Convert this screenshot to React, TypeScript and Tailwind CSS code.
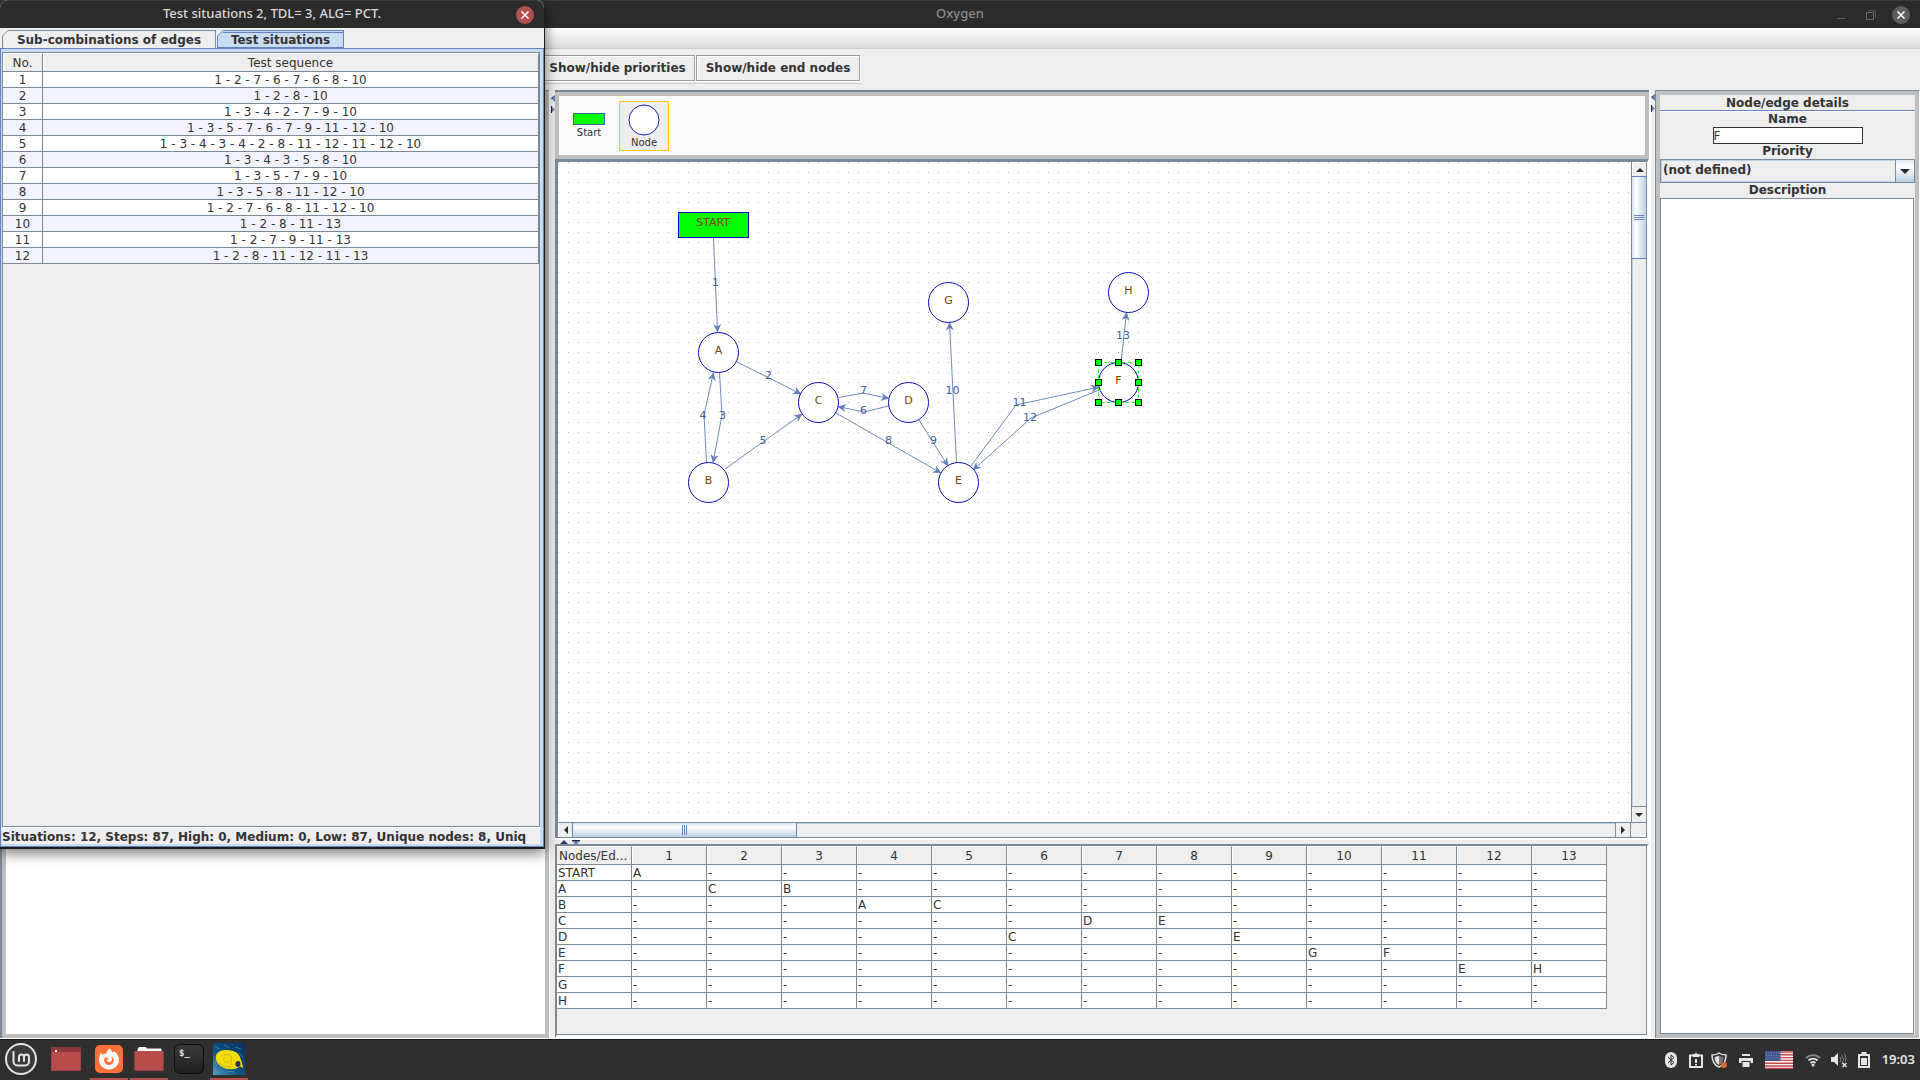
import React from "react";

const sequences = [
  "1 - 2 - 7 - 6 - 7 - 6 - 8 - 10",
  "1 - 2 - 8 - 10",
  "1 - 3 - 4 - 2 - 7 - 9 - 10",
  "1 - 3 - 5 - 7 - 6 - 7 - 9 - 11 - 12 - 10",
  "1 - 3 - 4 - 3 - 4 - 2 - 8 - 11 - 12 - 11 - 12 - 10",
  "1 - 3 - 4 - 3 - 5 - 8 - 10",
  "1 - 3 - 5 - 7 - 9 - 10",
  "1 - 3 - 5 - 8 - 11 - 12 - 10",
  "1 - 2 - 7 - 6 - 8 - 11 - 12 - 10",
  "1 - 2 - 8 - 11 - 13",
  "1 - 2 - 7 - 9 - 11 - 13",
  "1 - 2 - 8 - 11 - 12 - 11 - 13",
];

const edgeNumbers = [1, 2, 3, 4, 5, 6, 7, 8, 9, 10, 11, 12, 13];

const matrix: { node: string; targets: Record<number, string> }[] = [
  { node: "START", targets: { 1: "A" } },
  { node: "A", targets: { 2: "C", 3: "B" } },
  { node: "B", targets: { 4: "A", 5: "C" } },
  { node: "C", targets: { 7: "D", 8: "E" } },
  { node: "D", targets: { 6: "C", 9: "E" } },
  { node: "E", targets: { 10: "G", 11: "F" } },
  { node: "F", targets: { 12: "E", 13: "H" } },
  { node: "G", targets: {} },
  { node: "H", targets: {} },
];

const nodes = [
  { name: "A", x: 160.5, y: 190.5 },
  { name: "B", x: 150.5, y: 320.5 },
  { name: "C", x: 260.5, y: 240.5 },
  { name: "D", x: 350.5, y: 240.5 },
  { name: "E", x: 400.5, y: 320.5 },
  { name: "G", x: 390.5, y: 140.5 },
  { name: "H", x: 570.5, y: 130.5 },
  { name: "F", x: 560.5, y: 220.5 },
];

const edges = [
  { label: "1", points: "155.5,76 159.5,170", x: 157.5, y: 124 },
  { label: "2", points: "179,200 243,232", x: 210.5, y: 217 },
  { label: "3", points: "161.5,210.5 164,253 155,300.5", x: 164.5, y: 257 },
  { label: "4", points: "148.5,300.5 146,253 155.5,210.5", x: 145, y: 257 },
  { label: "5", points: "167,307 244,252", x: 205, y: 282 },
  { label: "6", points: "330.5,244 306,250 280,244.5", x: 305.5, y: 252 },
  { label: "7", points: "281,235.5 305,231 331,236.5", x: 305.5, y: 232 },
  { label: "8", points: "278,251 383,311", x: 330.5, y: 282 },
  { label: "9", points: "361,258 390,304", x: 375.5, y: 282 },
  { label: "10", points: "398.5,300.5 391.5,160.5", x: 394.5, y: 232 },
  { label: "11", points: "413,304 458,243 541,225", x: 461.5, y: 244 },
  { label: "12", points: "541,228 473,256 415,308", x: 472, y: 259 },
  { label: "13", points: "563,200.5 568.5,150.5", x: 565, y: 177 },
];

const handles = [
  [540.5, 200.5],
  [560.5, 200.5],
  [580.5, 200.5],
  [540.5, 220.5],
  [580.5, 220.5],
  [540.5, 240.5],
  [560.5, 240.5],
  [580.5, 240.5],
];

function Diagram() {
  return (
    <svg
      className="block h-full w-full bg-white"
      role="img"
      aria-label="Process graph"
      fontFamily="'DejaVu Sans', sans-serif"
      fontSize="11"
      textAnchor="middle"
    >
      <defs>
        <pattern id="dots" width="10" height="10" patternUnits="userSpaceOnUse">
          <rect width="1" height="1" fill="#bdbdbd" />
        </pattern>
        <marker
          id="arrow"
          markerUnits="userSpaceOnUse"
          markerWidth="12"
          markerHeight="12"
          refX="9"
          refY="5"
          orient="auto"
        >
          <path d="M9.500 5 1 1 3.500 5 1 9z" fill="#6482b9" />
        </marker>
      </defs>
      <rect width="100%" height="100%" fill="url(#dots)" />
      {edges.map((e) => (
        <polyline
          key={e.label}
          points={e.points}
          fill="none"
          stroke="#6c89be"
          markerEnd="url(#arrow)"
        />
      ))}
      {edges.map((e) => (
        <text key={e.label} x={e.x} y={e.y} fill="#446299">
          {e.label}
        </text>
      ))}
      <rect x="120.5" y="50.5" width="70" height="25" fill="#00ff00" stroke="#0000a8" />
      <text x="155" y="64" fill="#774400">
        START
      </text>
      {nodes.map((n) => (
        <g key={n.name}>
          <circle cx={n.x} cy={n.y} r="20" fill="#fff" stroke="#0a0ab4" />
          <text x={n.x} y={n.y + 1} fill="#774400">
            {n.name}
          </text>
        </g>
      ))}
      <rect
        x="540.5"
        y="200.5"
        width="40"
        height="40"
        fill="none"
        stroke="#00ff00"
        strokeDasharray="3 3"
      />
      {handles.map(([x, y]) => (
        <rect key={x + "-" + y} x={x - 3} y={y - 3} width="6" height="6" fill="#00ff00" stroke="#000" />
      ))}
    </svg>
  );
}

function Triangle({ d, w, h }: { d: string; w: number; h: number }) {
  return (
    <svg width={w} height={h} aria-hidden="true">
      <path d={d} fill="#2b2b2b" />
    </svg>
  );
}

function SplitArrows() {
  return (
    <svg width="4" height="18" className="mt-1" aria-hidden="true">
      <path d="M4 0v7L0 3.500z" fill="#6382bf" />
      <path d="M4 0 0 3.500h1z" fill="#222" />
      <path d="M0 11l4 3.500L0 18z" fill="#6382bf" />
      <path d="M0 11h1v7H0z" fill="#222" />
    </svg>
  );
}

function Canvas() {
  return (
    <div className="flex min-h-0 flex-1 flex-col border-l-3 border-t-3 border-[#7a8a99] border-r-2 border-r-white">
      <div className="flex min-h-0 flex-1">
        <div className="min-w-0 flex-1">
          <Diagram />
        </div>
        <div className="flex w-4 flex-col border-x border-[#7a8a99] bg-[#eeeeee]">
          <button aria-label="Scroll up" className="flex h-3.5 items-center justify-center border-t border-l border-white">
            <Triangle w={8} h={4} d="M0 4 4 0l4 4z" />
          </button>
          <div className="flex h-[83px] flex-col items-center justify-center gap-px border-y border-[#6382bf] bg-linear-to-r from-[#d5e3f1] via-white via-30% to-[#b8cfe5]">
            <i className="h-px w-2.5 bg-[#6382bf]" />
            <i className="h-px w-2.5 bg-[#6382bf]" />
            <i className="h-px w-2.5 bg-[#6382bf]" />
          </div>
          <div className="flex-1 border-l border-[#b8cfe5]" />
          <button aria-label="Scroll down" className="flex h-4 items-center justify-center border-t border-[#7a8a99]">
            <Triangle w={8} h={4} d="M0 0h8L4 4z" />
          </button>
        </div>
      </div>
      <div className="flex h-4 border-y border-[#7a8a99] bg-[#eeeeee]">
        <button aria-label="Scroll left" className="flex w-3.5 items-center justify-center border-l border-white">
          <Triangle w={4} h={8} d="M4 0v8L0 4z" />
        </button>
        <div className="flex w-[225px] items-center justify-center gap-px border-x border-[#6382bf] bg-linear-to-b from-[#d5e3f1] via-white via-30% to-[#b8cfe5]">
          <i className="h-2.5 w-px bg-[#6382bf]" />
          <i className="h-2.5 w-px bg-[#6382bf]" />
          <i className="h-2.5 w-px bg-[#6382bf]" />
        </div>
        <div className="flex-1 border-t border-[#b8cfe5]" />
        <button aria-label="Scroll right" className="flex w-4 items-center justify-center border-x border-[#7a8a99]">
          <Triangle w={4} h={8} d="M0 0v8l4-4z" />
        </button>
        <div className="w-4 border-r border-[#7a8a99]" />
      </div>
    </div>
  );
}

function MatrixTable() {
  return (
    <div className="h-[194px] shrink-0 border-t-2 border-l-2 border-[#7a8a99] border-r-2 border-r-white border-b-3 border-b-white">
      <div className="h-full border-r border-b border-[#7a8a99] bg-[#eeeeee]">
        <table className="table-fixed border-separate border-spacing-0 text-[12px] leading-[13px] text-[#333]">
          <colgroup>
            <col className="w-[75px]" />
            {edgeNumbers.map((n) => (
              <col key={n} className="w-[75px]" />
            ))}
          </colgroup>
          <thead>
            <tr>
              <th className="h-[19px] overflow-hidden border-t border-r border-b border-[#7a8a99] border-t-white p-0 pt-0.5 pl-0.5 text-left font-normal whitespace-nowrap">
                Nodes/Ed...
              </th>
              {edgeNumbers.map((n) => (
                <th
                  key={n}
                  className="h-[19px] border-t border-r border-b border-[#7a8a99] border-t-white p-0 pt-0.5 text-center font-normal shadow-[inset_1px_0_0_#fff]"
                >
                  {n}
                </th>
              ))}
            </tr>
          </thead>
          <tbody>
            {matrix.map((row) => (
              <tr key={row.node} className="bg-white">
                <td className="h-4 border-r border-b border-[#7a8a99] p-0 pt-0.5 pl-px">{row.node}</td>
                {edgeNumbers.map((n) => (
                  <td key={n} className="h-4 border-r border-b border-[#7a8a99] p-0 pt-0.5 pl-px">
                    {row.targets[n] ?? "-"}
                  </td>
                ))}
              </tr>
            ))}
          </tbody>
        </table>
      </div>
    </div>
  );
}

function Details() {
  return (
    <aside className="flex w-[265px] shrink-0 flex-col border-l border-t border-[#7a8a99] border-r border-r-white text-[12px] leading-[15px] font-bold text-[#333]">
      <div className="flex flex-1 flex-col border-4 border-[#bfbfbf] text-center">
        <h2 className="border-b border-[#6382bf] pt-0.5 leading-[13px]">Node/edge details</h2>
        <label htmlFor="name" className="border-t border-white">
          Name
        </label>
        <input
          id="name"
          defaultValue="F"
          className="h-[17px] w-[150px] self-center border border-[#333] bg-white font-normal text-[#333] outline-none"
        />
        <label htmlFor="priority">Priority</label>
        <div className="relative h-6">
          <select
            id="priority"
            className="block h-full w-full appearance-none border border-[#7a8a99] bg-[#eeeeee] pr-5 pb-0.5 pl-0.5 font-bold shadow-[inset_0_0_0_1px_#b8cfe5] outline-none"
          >
            <option>(not defined)</option>
          </select>
          <span className="pointer-events-none absolute inset-y-0 right-0 flex w-5 items-center justify-center border border-[#7a8a99] bg-linear-to-b from-[#dfe9f4] via-white via-30% to-[#b8cfe5]">
            <Triangle w={10} h={5} d="M0 0h10L5 5z" />
          </span>
        </div>
        <label htmlFor="description">Description</label>
        <textarea
          id="description"
          className="mr-px flex-1 resize-none border border-[#7a8a99] bg-white font-normal outline-none"
        />
      </div>
    </aside>
  );
}

function MainWindow() {
  return (
    <div className="flex min-h-0 flex-1 flex-col">
      <header className="flex h-7 shrink-0 items-center border-t border-[#3a3a3a] bg-[#2b2b2b]">
        <h1 className="flex-1 pb-0.5 pl-[83px] text-center font-['Noto_Sans',sans-serif] text-[13px] font-medium text-[#8c8c8c]">
          Oxygen
        </h1>
        <div className="flex items-center pr-2.5">
          <button aria-label="Minimize" className="mr-[21px] flex h-4 w-2 items-end pb-1">
            <i className="h-px w-2 bg-[#5e5e5e]" />
          </button>
          <button aria-label="Maximize" className="mr-4 text-[#6a6a6a]">
            <svg width="10" height="10" fill="none" stroke="currentColor">
              <path d="M.500 2.500h7v7h-7z" />
              <path d="M2 .500h7.500V8" opacity=".6" />
            </svg>
          </button>
          <button aria-label="Close" className="flex size-[18px] items-center justify-center rounded-full bg-[#5e5e5e]">
            <svg width="8" height="8" stroke="#fff" strokeWidth="1.500">
              <path d="m.5.5 7 7m0-7-7 7" />
            </svg>
          </button>
        </div>
      </header>
      <div className="h-[21px] shrink-0 border-b border-[#ccc] bg-linear-to-b from-white to-[#dadada]" />
      <div className="flex h-[41px] shrink-0 items-start bg-[#eeeeee] pt-1.5 pl-[540px] text-[12px] font-bold text-[#333]">
        <div className="flex gap-px border-b border-[#ccc] pr-0.5 pb-0.5">
          <button className="h-[26px] w-[155px] border border-[#999] whitespace-nowrap shadow-[inset_1px_1px_0_#fff,1px_1px_0_#fff]">
            Show/hide priorities
          </button>
          <button className="h-[26px] w-[164px] border border-[#999] whitespace-nowrap shadow-[inset_1px_1px_0_#fff,1px_1px_0_#fff]">
            Show/hide end nodes
          </button>
        </div>
      </div>
      <main className="flex min-h-0 flex-1 bg-[#eeeeee]">
        <section className="w-[549px] shrink-0 border-l-2 border-t border-[#7a8a99]">
          <div className="h-full border-4 border-[#bfbfbf] bg-white" />
        </section>
        <div className="flex w-1.5 shrink-0 justify-end border-l border-white pt-px">
          <SplitArrows />
        </div>
        <section className="flex min-w-0 flex-1 flex-col border-t-2 border-[#7a8a99]">
          <div className="flex h-[67px] shrink-0 gap-3.5 border-4 border-[#bfbfbf] bg-[#fafafa] px-3.5 py-[5px] text-[10px] leading-3 text-[#333]">
            <button className="flex w-8 flex-col items-center justify-center gap-0.5">
              <span className="h-3 w-8 border border-[#3c5fae] bg-[#00ff00]" />
              Start
            </button>
            <button className="flex size-[50px] flex-col items-center justify-center border border-[#ffc800] bg-[#eeeeee]">
              <svg width="32" height="33" aria-hidden="true">
                <circle cx="16" cy="16" r="15" fill="#fff" stroke="#1c1cb8" />
              </svg>
              Node
            </button>
          </div>
          <Canvas />
          <div className="h-1.5 shrink-0 border-t-2 border-white">
            <svg width="24" height="4" className="ml-1 block" aria-hidden="true">
              <path d="m1 4 4-4 4 4z" fill="#333c66" />
              <path d="M13 1h8l-3 3h-2z" fill="#6382bf" />
              <path d="M13 0h8v1h-8z" fill="#222" />
            </svg>
          </div>
          <MatrixTable />
        </section>
        <div className="flex w-1.5 shrink-0 justify-end border-l-2 border-white">
          <SplitArrows />
        </div>
        <Details />
      </main>
      <div className="h-px shrink-0 bg-white" />
    </div>
  );
}

function Dialog() {
  return (
    <section
      aria-label="Test situations"
      className="absolute top-0 left-0 flex h-[849px] w-[545px] flex-col rounded-t-lg border-r border-b-2 border-[#1c1c1c] bg-[#eeeeee] text-[12px] text-[#333] shadow-[0_4px_14px_rgba(0,0,0,0.55)]"
    >
      <header className="flex h-7 shrink-0 items-center rounded-t-lg border-t border-[#3a3a3a] bg-[#2b2b2b] pr-2.5">
        <h2 className="flex-1 pb-0.5 pl-7 text-center font-['Noto_Sans',sans-serif] text-[13px] font-medium text-[#dadada]">
          Test situations 2, TDL= 3, ALG= PCT.
        </h2>
        <button aria-label="Close dialog" className="flex size-[18px] items-center justify-center rounded-full bg-[#b4504e]">
          <svg width="8" height="8" stroke="#fff" strokeWidth="1.500">
            <path d="m.5.5 7 7m0-7-7 7" />
          </svg>
        </button>
      </header>
      <div role="tablist" className="flex h-5 shrink-0 items-end pl-0.5 pt-0.5 font-bold">
        <button
          role="tab"
          aria-selected="false"
          className="relative h-full w-[214px] border-t border-r border-l border-[#7a8a99] pt-0.5 leading-[15px] whitespace-nowrap"
        >
          <svg width="6" height="6" className="absolute -top-px -left-px bg-[#eeeeee]" aria-hidden="true">
            <path d="M.500 6 6 .500" stroke="#7a8a99" />
          </svg>
          Sub-combinations of edges
        </button>
        <button
          role="tab"
          aria-selected="true"
          className="relative ml-px h-full w-[127px] border border-[#6382bf] bg-[#c8ddf2] pt-0.5 leading-[14px] whitespace-nowrap shadow-[inset_0_1px_0_#c8ddf2,inset_0_2px_0_#6382bf]"
        >
          <svg width="6" height="6" className="absolute -top-px -left-px bg-[#eeeeee]" aria-hidden="true">
            <path d="M0 6 6 0v6z" fill="#c8ddf2" />
            <path d="M.500 6 6 .500" stroke="#6382bf" />
          </svg>
          Test situations
        </button>
      </div>
      <div className="flex min-h-0 flex-1 flex-col border border-[#6382bf]">
        <div className="flex min-h-0 flex-1 flex-col border-t-3 border-r-3 border-b-2 border-l border-[#c8ddf2]">
          <div className="min-h-0 flex-1 border border-[#7a8a99]">
            <table className="w-full table-fixed border-separate border-spacing-0 text-center leading-[13px]">
              <colgroup>
                <col className="w-10" />
                <col />
              </colgroup>
              <thead>
                <tr>
                  {["No.", "Test sequence"].map((h) => (
                    <th
                      key={h}
                      className="h-[19px] border-t border-r border-b border-[#7a8a99] border-t-white p-0 pt-0.5 font-normal shadow-[inset_1px_0_0_#fff]"
                    >
                      {h}
                    </th>
                  ))}
                </tr>
              </thead>
              <tbody>
                {sequences.map((s, i) => (
                  <tr key={s} className="bg-white even:bg-[#f3f3ff]">
                    <td className="h-4 border-r border-b border-[#7a8a99] p-0 pt-0.5">{i + 1}</td>
                    <td className="h-4 border-r border-b border-[#7a8a99] p-0 pt-0.5">{s}</td>
                  </tr>
                ))}
              </tbody>
            </table>
          </div>
          <p className="h-[17px] shrink-0 border-t border-white pt-0.5 leading-[14px] font-bold whitespace-nowrap">
            Situations: 12, Steps: 87, High: 0, Medium: 0, Low: 87, Unique nodes: 8, Uniq
          </p>
        </div>
      </div>
    </section>
  );
}

function TaskButton({
  label,
  open,
  wide,
  children,
}: {
  label: string;
  open?: boolean;
  wide?: boolean;
  children: React.ReactNode;
}) {
  return (
    <button
      aria-label={label}
      className={
        (wide ? "w-12 " : "w-[38px] ") +
        "flex h-full items-center justify-center border-b-2 " +
        (open ? "border-[#b4504e]" : "border-transparent")
      }
    >
      {children}
    </button>
  );
}

function Taskbar() {
  return (
    <footer className="flex h-[41px] shrink-0 items-center border-t border-[#161616] bg-[#2f2f2f]">
      <div className="flex h-full flex-1 items-center">
        <button aria-label="Menu" className="flex h-full w-[42px] items-center justify-center border-b-2 border-transparent">
          <svg width="32" height="32" fill="none" stroke="#e4e4e4">
            <circle cx="16" cy="16" r="15" strokeWidth="2" fill="#3b3b3b" />
            <path
              d="M8.500 9v9.500a4 4 0 0 0 4 4h7.500a4 4 0 0 0 4-4V14a2.500 2.500 0 0 0-5 0v4M19 14a2.500 2.500 0 0 0-5 0v4"
              strokeWidth="2"
              strokeLinecap="round"
            />
          </svg>
        </button>
        <TaskButton label="Desktop" wide>
          <svg width="30" height="24">
            <path d="M0 0h30v24H0z" fill="#b84c4b" />
            <path d="M0 0h30v5H0z" fill="#8b3a39" />
            <path d="M4 3h2v2H4z" fill="#fff" />
            <path d="M.500 .500h29v23H.500z" fill="none" stroke="#8b3a39" opacity=".5" />
          </svg>
        </TaskButton>
        <div className="flex h-full gap-0.5">
          <TaskButton label="Firefox" open>
            <svg width="28" height="28" viewBox="0 0 28 28">
              <rect width="28" height="28" rx="5" fill="#ff7139" />
              <path
                d="M14.500 3.500c1.800 1.200 2.500 2.600 2.700 4.200.8-.3 1.300-.8 1.600-1.400C22 8 24 11 24 15a10 9.500 0 0 1-20 0c0-3 .8-5.500 2.300-7.800.2 1.200.6 1.800 1.200 2.300C8.500 8.800 10 8.500 11 8.800c.8-2.300 2-4 3.500-5.300z"
                fill="#fff"
              />
              <path
                d="M9.500 13c1.500-.8 3-.5 4.300.5l-2 1.200c-.3 1.300.8 2.400 2.200 2.400 1.900 0 3.200-1.300 3-3.200 0-.9-.4-1.500-.9-2.100 1.800.6 2.700 2 2.700 3.800a4.800 4.500 0 0 1-9.600 0c0-1 .1-1.800.3-2.600z"
                fill="#ff7139"
              />
            </svg>
          </TaskButton>
          <TaskButton label="Files" open>
            <svg width="30" height="25">
              <path d="M4 1.500 5 0h7l1 1.500h14l1 3H3z" fill="#fff" />
              <rect y="4" width="30" height="20" rx="2" fill="#b84c4b" />
              <path d="M.500 5v17.500l1 1h27l1-1V5" fill="none" stroke="#8f3b3a" />
            </svg>
          </TaskButton>
          <TaskButton label="Terminal">
            <span className="flex size-[30px] rounded-md border border-[#0c0c0c] bg-linear-to-b from-[#3a3a3a] to-[#1f1f1f] pt-0.5 pl-1 font-['DejaVu_Sans_Mono',monospace] text-[9px] leading-3 font-bold text-[#e8e8e8]">
              $_
            </span>
          </TaskButton>
          <TaskButton label="Oxygen" open>
            <svg width="32" height="32" viewBox="0 0 32 32">
              <defs>
                <linearGradient id="sea" x1="1" y1="0" x2="0" y2="1">
                  <stop offset="0" stopColor="#06305e" />
                  <stop offset=".6" stopColor="#0f5685" />
                  <stop offset="1" stopColor="#5a9cc4" />
                </linearGradient>
              </defs>
              <path d="M0 0h32v32H0z" fill="url(#sea)" />
              <path d="m2 3 4 3M11 2l5 3M22 4l6 2M26 10l4 4M2 26l7 4M13 28l9 1M1 18l3 5" stroke="#4d93bd" opacity=".7" />
              <path
                d="M3 13c1-4 5-6 10-6 7 0 12 2 14 7l2 6 1 5-4-1c-4 3-12 3-17 0-4-2-7-7-6-11z"
                fill="#f2dc0c"
              />
              <path
                d="M8 13c3-3 8-2 11 1-2 3-1 6 0 8M12 14c-3 3-1 6 4 5M6 20c3 3 7 4 12 4"
                fill="none"
                stroke="#c9ad08"
                strokeWidth=".8"
              />
              <ellipse cx="25" cy="21" rx="2.500" ry="3" fill="#2c3257" />
              <path d="m27 24 2 2" stroke="#2a2440" strokeWidth="1.500" />
            </svg>
          </TaskButton>
        </div>
      </div>
      <div className="flex items-center pr-[5px] text-[#e4e4e4]">
        <svg width="12" height="16" className="mr-3" role="img" aria-label="Bluetooth">
          <rect width="12" height="16" rx="6" fill="#e4e4e4" />
          <path d="m3 5 6 5.500L6 13V3l3 2.500L3 11" fill="none" stroke="#2f2f2f" />
        </svg>
        <svg width="14" height="16" className="mr-2" role="img" aria-label="Updates">
          <path d="M1 3.500h12v11.500H1z" fill="none" stroke="currentColor" strokeWidth="2" />
          <path d="M4 2h2l1-2 1 2h2v3H4zM6 7h2v4H6zM6 12h2v1.500H6z" fill="currentColor" />
        </svg>
        <svg width="16" height="16" className="mr-3" role="img" aria-label="Firewall">
          <path d="M8 1c2 1.500 4 2 7 2 0 6-2 10-7 12C3 13 1 9 1 3c3 0 5-.5 7-2z" fill="#2f2f2f" stroke="currentColor" strokeWidth="1.500" />
          <path d="M8 3.500c-1.500 1-2.500 1.200-4.500 1.500C3.700 9 5 11.500 8 13z" fill="currentColor" />
          <path d="M8 3.500c1.500 1 2.500 1.200 4.500 1.500C12.300 9 11 11.500 8 13z" fill="#777" />
          <circle cx="13" cy="13" r="3" fill="#e0692f" />
        </svg>
        <svg width="14" height="14" className="mr-3" role="img" aria-label="Printer">
          <path d="M3 1h8v2H3zM0 5h14v5h-2.500V8h-9v2H0zM3.500 9h7v5h-7z" fill="currentColor" />
        </svg>
        <svg width="28" height="18" className="mr-3" role="img" aria-label="English (US)">
          <path d="M0 0h28v18H0z" fill="#f4f0f0" />
          <path d="M0 1h28M0 3.800h28M0 6.600h28M0 9.400h28M0 12.200h28M0 15h28M0 17.500h28" stroke="#c9474f" strokeWidth="1.400" />
          <path d="M0 0h15.500v10H0z" fill="#42558f" />
          <path d="M1 2h14M1 4.500h14M1 7h14" stroke="#8493bd" strokeDasharray="1 1.500" />
        </svg>
        <svg width="16" height="14" className="mr-2.5" fill="none" strokeWidth="1.800" role="img" aria-label="Wi-Fi">
          <path d="M1 5a10 10 0 0 1 14 0" stroke="#888" />
          <path d="M3.500 7.500a6.500 6.500 0 0 1 9 0M5.500 10a3.800 3.800 0 0 1 5 0" stroke="currentColor" />
          <circle cx="8" cy="12" r="1.500" fill="currentColor" />
        </svg>
        <svg width="17" height="16" className="mr-2.5" role="img" aria-label="Volume muted">
          <path d="M0 5h3l4-4v13l-4-4H0z" fill="currentColor" />
          <path d="M9 5q1.500 2.500 0 5M11 3q3 4.500 0 9M13.500 1.500q2.500 4.500 1 8" fill="none" stroke="#888" />
          <path d="m11.500 11 4 4m0-4-4 4" stroke="currentColor" strokeWidth="1.500" />
        </svg>
        <svg width="12" height="16" className="mr-3" role="img" aria-label="Battery">
          <path d="M1 3h10v12H1z" fill="none" stroke="currentColor" strokeWidth="2" />
          <path d="M3.500 0h5v3h-5zM3 6h6v7H3z" fill="currentColor" />
        </svg>
        <time className="font-['Noto_Sans',sans-serif] text-[13px] font-semibold">19:03</time>
      </div>
    </footer>
  );
}

export default function App() {
  return (
    <div className="relative flex h-screen w-full flex-col overflow-hidden bg-[#eeeeee] font-['DejaVu_Sans',sans-serif]">
      <MainWindow />
      <Dialog />
      <Taskbar />
    </div>
  );
}
